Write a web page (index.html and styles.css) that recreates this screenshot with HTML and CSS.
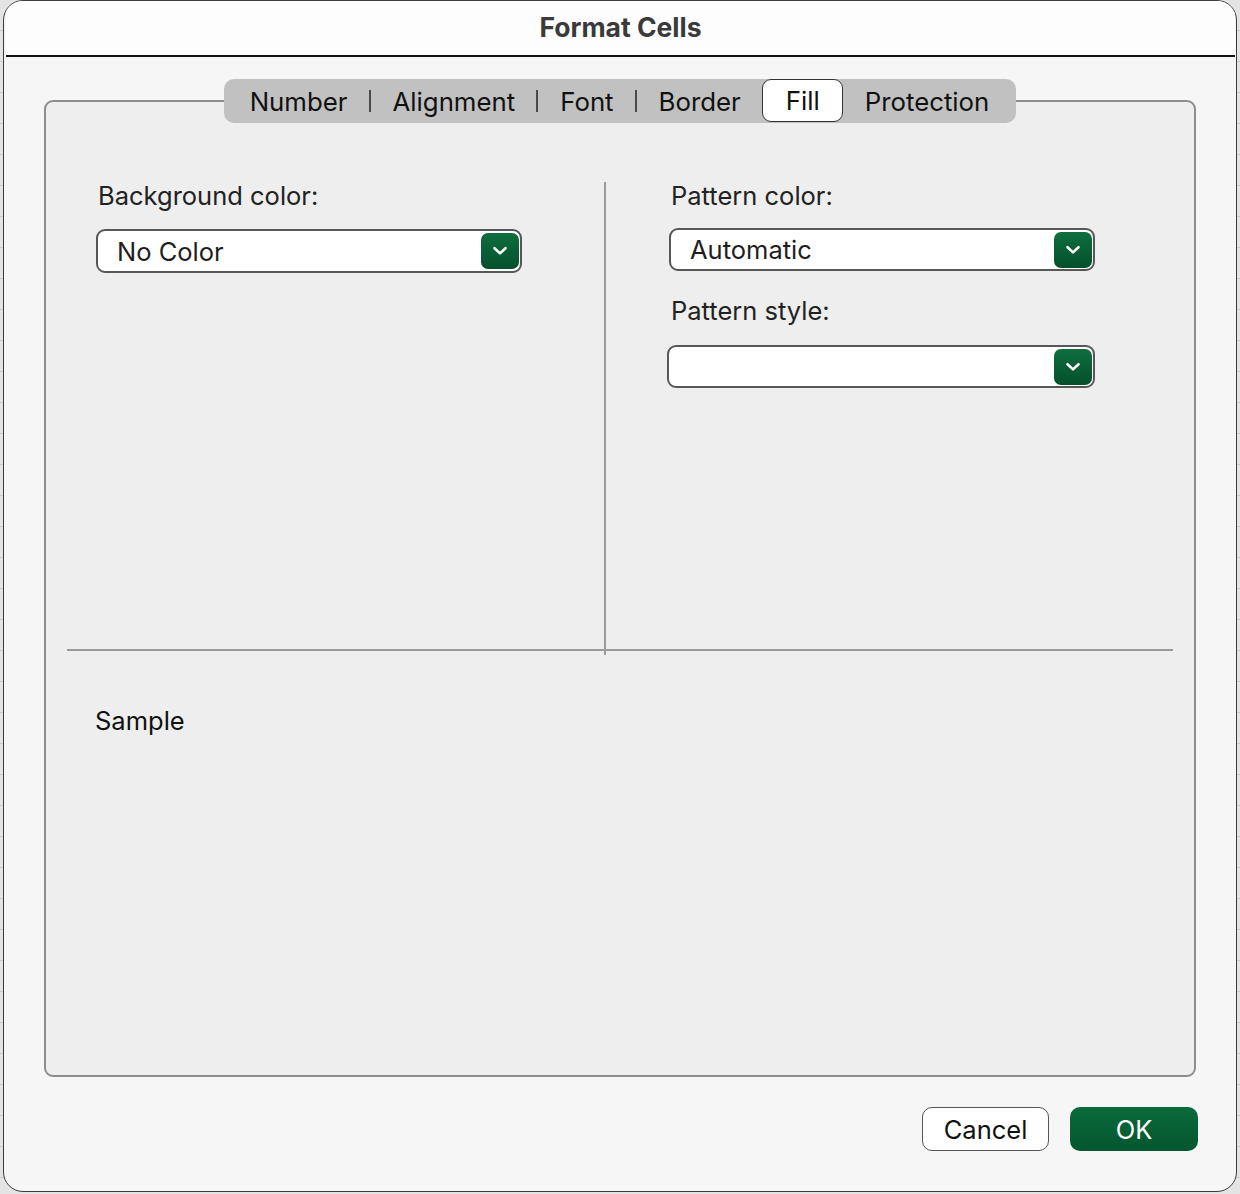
FILE: index.html
```html
<!DOCTYPE html>
<html lang="en">
<head>
<meta charset="utf-8">
<title>Format Cells</title>
<link rel="stylesheet" href="styles.css">
</head>
<body>
<div class="window">
  <div class="titlebar">Format Cells</div>
  <div class="content">
    <div class="tabbar">
      <div class="tab">Number</div>
      <div class="sep"></div>
      <div class="tab">Alignment</div>
      <div class="sep"></div>
      <div class="tab">Font</div>
      <div class="sep"></div>
      <div class="tab">Border</div>
      <div class="tab tab-active">Fill</div>
      <div class="tab">Protection</div>
    </div>
    <div class="group">
      <div class="panes">
        <div class="pane pane-left">
          <div class="label">Background color:</div>
          <div class="select select-left">
            <span class="select-text">No Color</span>
            <span class="select-btn"><svg width="16" height="10" viewBox="0 0 16 10"><path d="M2.5 2.2 L8 7.4 L13.5 2.2" fill="none" stroke="#fff" stroke-width="2.6" stroke-linecap="round" stroke-linejoin="round"/></svg></span>
          </div>
        </div>
        <div class="pane pane-right">
          <div class="label">Pattern color:</div>
          <div class="select">
            <span class="select-text">Automatic</span>
            <span class="select-btn"><svg width="16" height="10" viewBox="0 0 16 10"><path d="M2.5 2.2 L8 7.4 L13.5 2.2" fill="none" stroke="#fff" stroke-width="2.6" stroke-linecap="round" stroke-linejoin="round"/></svg></span>
          </div>
          <div class="label label-gap">Pattern style:</div>
          <div class="select select-empty">
            <span class="select-text"></span>
            <span class="select-btn"><svg width="16" height="10" viewBox="0 0 16 10"><path d="M2.5 2.2 L8 7.4 L13.5 2.2" fill="none" stroke="#fff" stroke-width="2.6" stroke-linecap="round" stroke-linejoin="round"/></svg></span>
          </div>
        </div>
      </div>
      <div class="hline"></div>
      <div class="sample-label">Sample</div>
    </div>
    <div class="actions">
      <button class="btn btn-cancel">Cancel</button>
      <button class="btn btn-ok">OK</button>
    </div>
  </div>
</div>
</body>
</html>
```

FILE: styles.css
```css
* { box-sizing: border-box; }

html, body {
  margin: 0;
  padding: 0;
}

body {
  width: 1240px;
  height: 1194px;
  overflow: hidden;
  background-color: #e4e4e4;
  background-image: repeating-linear-gradient(to bottom, transparent 0, transparent 30px, #c9c9c9 30px, #c9c9c9 31px);
  font-family: "Inter", "Noto Sans", "Liberation Sans", sans-serif;
  color: #1c1c1c;
}

.window {
  margin-left: 3px;
  width: 1234px;
  height: 1192px;
  border: 1.5px solid #3c3c3c;
  border-radius: 20px;
  overflow: hidden;
  background: #f6f6f6;
  display: flex;
  flex-direction: column;
}

.titlebar {
  height: 56px;
  flex: none;
  background: #fdfdfd;
  border-bottom: 2px solid #111;
  display: flex;
  align-items: center;
  justify-content: center;
  font-weight: 700;
  font-size: 26.5px;
  color: #3a3a3a;
  padding-bottom: 2px;
  margin: 0 1px 0 2px;
}

.content {
  flex: 1;
  padding: 22px 38px 0 40px;
  display: flex;
  flex-direction: column;
}

.tabbar {
  align-self: center;
  position: relative;
  z-index: 2;
  height: 44px;
  margin-left: -2px;
  display: flex;
  align-items: stretch;
  background: #c1c1c1;
  border-radius: 10px;
  padding: 0 6px 0 4px;
  font-size: 25.8px;
  color: #111;
}

.tab {
  display: flex;
  align-items: center;
  padding: 0 21px 0 22px;
}

.tab-active {
  background: #fff;
  border: 1.5px solid #333;
  border-radius: 9px;
  margin: 0 0 1px;
  padding: 0 22px 0 23px;
}

.sep {
  width: 2px;
  height: 22px;
  align-self: center;
  background: #4a4a4a;
}

.group {
  margin-top: -23px;
  margin-right: 2px;
  height: 977px;
  border: 2px solid #8d8d8d;
  border-radius: 9px;
  background: #eeeeee;
  display: flex;
  flex-direction: column;
}

.panes {
  margin-top: 80px;
  display: grid;
  grid-template-columns: 558px 1fr;
  height: 473px;
}

.pane-left {
  padding-left: 50px;
}

.pane-right {
  border-left: 2px solid #9a9a9a;
  padding-left: 63px;
}

.label {
  height: 28px;
  line-height: 28px;
  font-size: 25.5px;
  color: #222;
  padding-left: 2px;
}

.label-gap {
  margin-top: 26px;
}

.select {
  margin-top: 18px;
  width: 426px;
  height: 43px;
  border: 2px solid #575757;
  border-radius: 9px;
  background: #fff;
  display: flex;
  align-items: center;
  justify-content: space-between;
  padding: 0 1px 0 19px;
}

.select-left {
  margin-top: 19px;
  height: 44px;
}

.select-empty {
  margin-top: 20px;
  margin-left: -2px;
  width: 428px;
}

.select-text {
  font-size: 25.5px;
  color: #1e1e1e;
}

.select-btn {
  width: 38px;
  height: 36px;
  border-radius: 7px;
  background: linear-gradient(to bottom, #0f6e3f, #04502b);
  display: flex;
  align-items: center;
  justify-content: center;
}

.hline {
  margin: -6px 21px 0 21px;
  height: 2px;
  background: #9a9a9a;
}

.sample-label {
  margin-top: 56px;
  padding-left: 49px;
  height: 28px;
  line-height: 28px;
  font-size: 25.5px;
  color: #111;
}

.actions {
  margin-top: 30px;
  display: flex;
  justify-content: flex-end;
  gap: 21px;
}

.btn {
  height: 44px;
  border-radius: 10px;
  font-family: inherit;
  font-size: 25.5px;
  padding: 0;
  cursor: default;
}

.btn-cancel {
  width: 127px;
  background: #fff;
  border: 1.5px solid #555;
  color: #111;
}

.btn-ok {
  width: 128px;
  border: none;
  background: linear-gradient(to bottom, #0b6a3b, #055630);
  color: #fff;
}
```
